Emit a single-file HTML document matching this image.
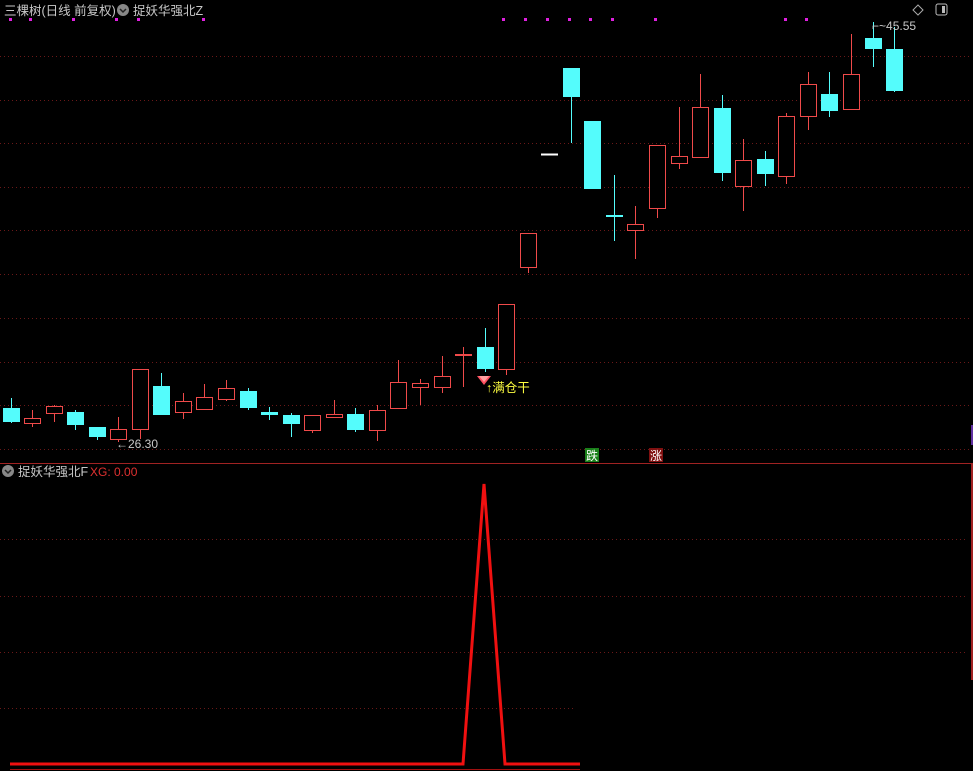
<!DOCTYPE html>
<html><head><meta charset="utf-8"><style>
html,body{margin:0;padding:0;background:#000;}
body{width:973px;height:771px;overflow:hidden;position:relative;font-family:"Liberation Sans","Noto Sans CJK SC",sans-serif;}
svg{position:absolute;left:0;top:0;}
</style></head><body>
<svg width="973" height="771" viewBox="0 0 973 771" xmlns="http://www.w3.org/2000/svg" font-family="Liberation Sans, Noto Sans CJK SC, sans-serif">
<g stroke="#6a1818" stroke-width="1" stroke-dasharray="1,3">
<line x1="0" y1="56.5" x2="970" y2="56.5"/><line x1="0" y1="100.5" x2="970" y2="100.5"/><line x1="0" y1="143.5" x2="970" y2="143.5"/><line x1="0" y1="187.5" x2="970" y2="187.5"/><line x1="0" y1="230.5" x2="970" y2="230.5"/><line x1="0" y1="274.5" x2="970" y2="274.5"/><line x1="0" y1="318.5" x2="970" y2="318.5"/><line x1="0" y1="362.5" x2="970" y2="362.5"/><line x1="0" y1="405.5" x2="970" y2="405.5"/><line x1="0" y1="449.5" x2="970" y2="449.5"/>
<line x1="0" y1="539.5" x2="968" y2="539.5"/><line x1="0" y1="596.5" x2="968" y2="596.5"/><line x1="0" y1="652.5" x2="968" y2="652.5"/><line x1="0" y1="708.5" x2="574" y2="708.5"/>
</g>
<line x1="0" y1="463.5" x2="973" y2="463.5" stroke="#a02222"/>
<line x1="972" y1="464" x2="972" y2="680" stroke="#a02222" stroke-width="2"/>
<line x1="972" y1="425" x2="972" y2="445" stroke="#6030a0" stroke-width="2"/>
<g fill="#e020e0">
<rect x="9" y="18" width="3" height="3"/><rect x="29" y="18" width="3" height="3"/><rect x="72" y="18" width="3" height="3"/><rect x="115" y="18" width="3" height="3"/><rect x="137" y="18" width="3" height="3"/><rect x="202" y="18" width="3" height="3"/><rect x="502" y="18" width="3" height="3"/><rect x="524" y="18" width="3" height="3"/><rect x="546" y="18" width="3" height="3"/><rect x="568" y="18" width="3" height="3"/><rect x="589" y="18" width="3" height="3"/><rect x="611" y="18" width="3" height="3"/><rect x="654" y="18" width="3" height="3"/><rect x="784" y="18" width="3" height="3"/><rect x="805" y="18" width="3" height="3"/>
</g>
<text x="4" y="15" fill="#c8c8c8" font-size="12.5">三棵树(日线 前复权)</text>
<circle cx="123" cy="10" r="6" fill="#888"/><path d="M120 9l3 3 3-3" stroke="#222" stroke-width="1.5" fill="none"/>
<text x="133" y="15" fill="#c8c8c8" font-size="12.5">捉妖华强北Z</text>
<path d="M918 5l5 5-5 5-5-5z" stroke="#aaa" fill="none"/>
<rect x="936" y="4" width="11" height="11" rx="2" stroke="#bbb" fill="none"/><rect x="942" y="6" width="3" height="7" fill="#bbb"/>
<g id="c"></g>
<text x="116" y="448" fill="#c8c8c8" font-size="12">←26.30</text>
<text x="872" y="30" fill="#c8c8c8" font-size="12">⌐~45.55</text>
<path d="M477 376h14l-7 9z" fill="#ff5060"/><path d="M479 376h10l-5 6z" fill="#ffa0a0"/>
<text x="486" y="392" fill="#ffff40" font-size="12.5">↑满仓干</text>
<rect x="585" y="448" width="14" height="14" fill="#1a801a"/><text x="586" y="460" fill="#fff" font-size="12">跌</text>
<rect x="649" y="448" width="14" height="14" fill="#801010"/><text x="650" y="460" fill="#fff" font-size="12">涨</text>
<circle cx="8" cy="471" r="6" fill="#888"/><path d="M5 470l3 3 3-3" stroke="#222" stroke-width="1.5" fill="none"/>
<text x="18" y="476" fill="#c8c8c8" font-size="12.5">捉妖华强北F</text>
<text x="90" y="476" fill="#e03030" font-size="12">XG: 0.00</text>
<polyline points="10,764 463,764 484,484 505,764 580,764" fill="none" stroke="#f01010" stroke-width="3"/>
<line x1="10" y1="769.5" x2="580" y2="769.5" stroke="#a01010"/>
</svg>
<script>
var d=[
[0,408,422,398,423],[1,418,423,410,427],[1,406,413,405,422],[0,412,425,410,430],[0,427,437,427,440],[1,429,439,417,442],
[1,369,429,369,439],[0,386,415,373,415],[1,401,412,393,419],[1,397,409,384,410],[1,388,399,380,401],[0,391,408,388,410],
[0,412,415,407,420],[0,415,424,413,437],[1,415,430,415,433],[1,414,417,400,417],[0,414,430,408,432],[1,410,430,405,441],
[1,382,408,360,408],[1,383,387,379,405],[1,376,387,356,393],[2,354,356,347,387],[0,347,369,328,372],[1,304,369,304,375],
[1,233,267,233,273],[3,154,154,154,154],[0,68,97,68,143],[0,121,189,121,189],[4,215,217,175,241],[1,224,230,206,259],
[1,145,208,145,218],[1,156,163,107,169],[1,107,157,74,157],[0,108,173,95,181],[1,160,186,139,211],[0,159,174,151,186],
[1,116,176,113,184],[1,84,116,72,130],[0,94,111,72,117],[1,74,109,34,109],[0,38,49,22,67],[0,49,91,27,92]];
var s='';
d.forEach(function(c,i){var x=Math.round(2.5+21.55*i),cx=x+8.5,t=c[0];
var red='#f04a4a',cy='#54fcfc';
if(t==3){s+='<line x1="'+x+'" y1="154.5" x2="'+(x+17)+'" y2="154.5" stroke="#fff" stroke-width="2"/>';return;}
var col=(t==1||t==2)?red:cy;
s+='<line x1="'+cx+'" y1="'+c[3]+'" x2="'+cx+'" y2="'+c[4]+'" stroke="'+col+'"/>';
if(t==1)s+='<rect x="'+(x+0.5)+'" y="'+(c[1]+0.5)+'" width="16" height="'+(c[2]-c[1])+'" fill="#000" stroke="'+red+'"/>';
else if(t==2||t==4)s+='<rect x="'+x+'" y="'+c[1]+'" width="17" height="2" fill="'+col+'"/>';
else s+='<rect x="'+x+'" y="'+c[1]+'" width="17" height="'+(c[2]-c[1])+'" fill="'+cy+'"/>';});
document.getElementById('c').innerHTML=s;
</script>
</body></html>
